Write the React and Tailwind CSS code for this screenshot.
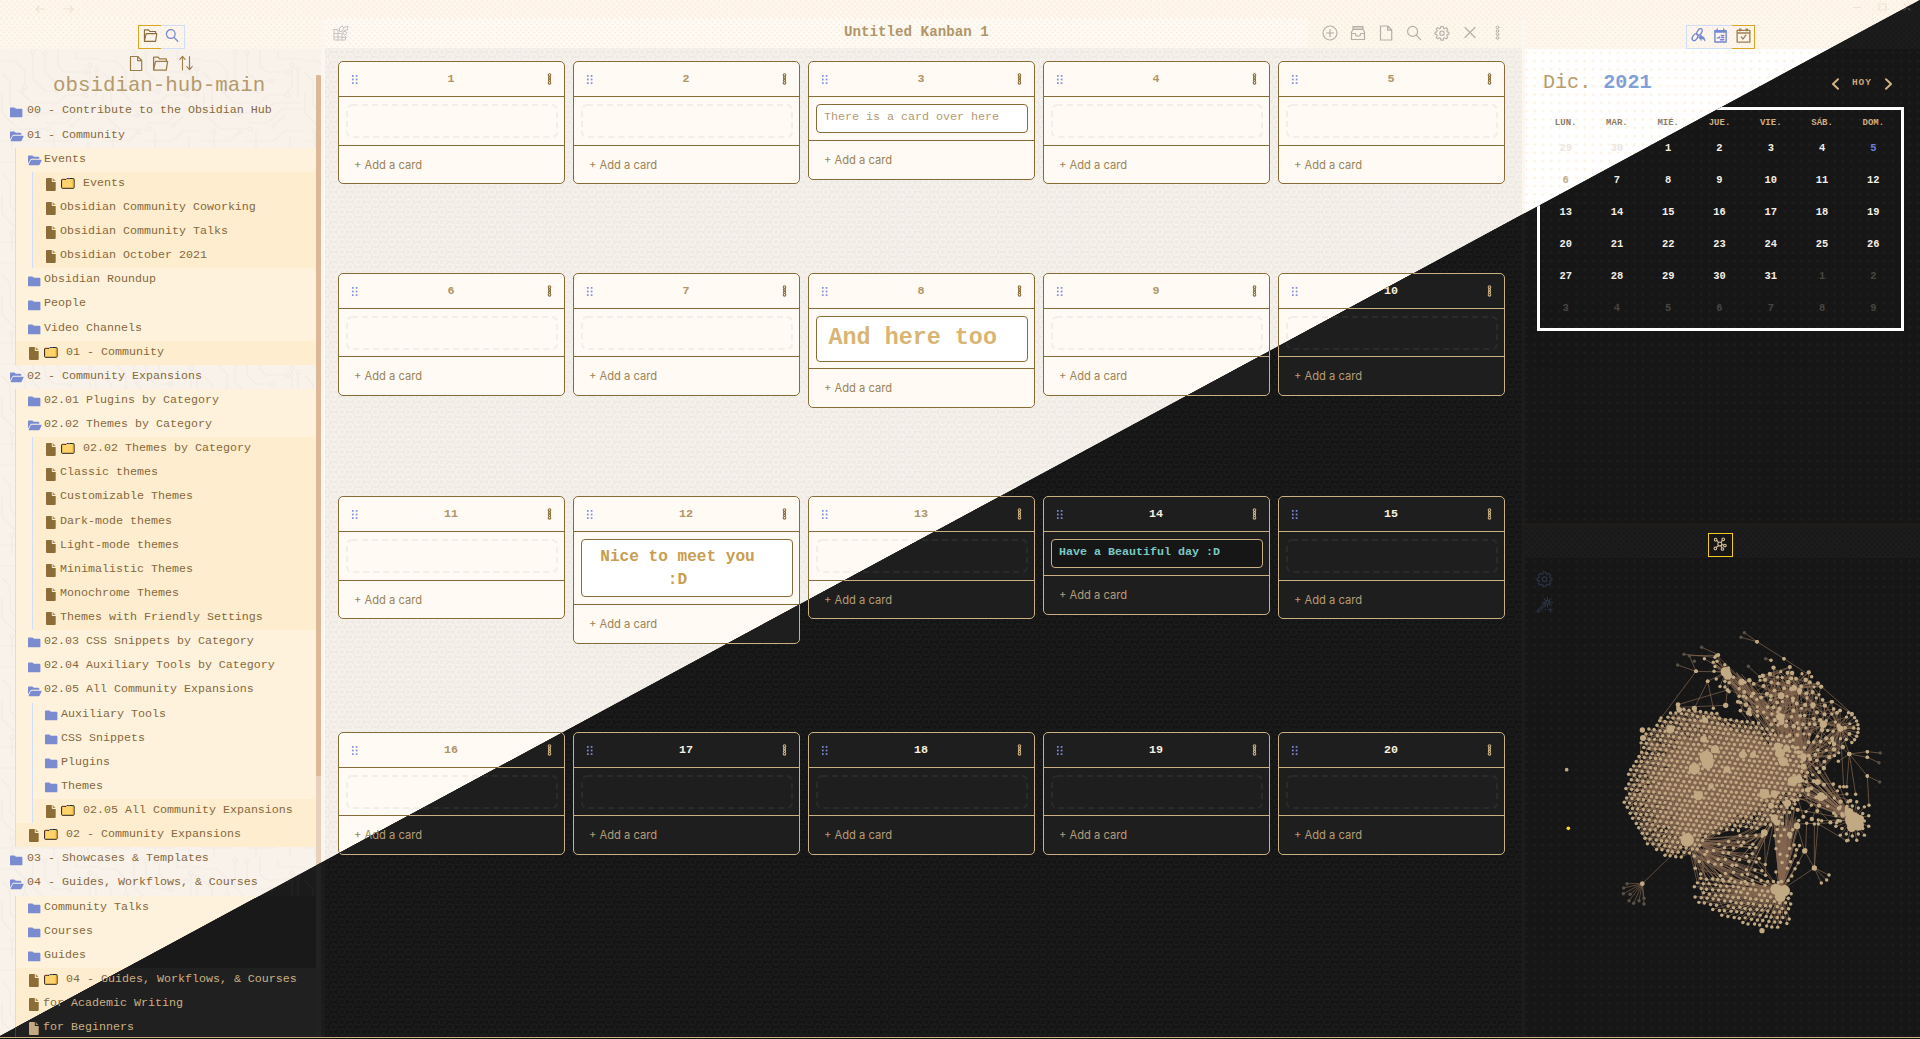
import React, { createContext, useContext, useMemo } from "react";

const Mode = createContext("light");

const LIGHT = {
  page: "bg-[#fff7ed]",
  titleBar: "bg-[#fff6ec]",
  faint: "text-[#efe3d3]",
  sidePanel: "bg-[#f9f2eb]",
  text: "text-[#86693b]",
  heading: "text-[#b39a6c]",
  title: "text-[#b1966a]",
  guide: "border-[#cfdffa]",
  nest: "bg-[#fff2dd]",
  file: "bg-[#ffedcf]",
  fileIcon: "text-[#8c6d37]",
  divider: "bg-[#fbf6ef]",
  track: "bg-[#e7d1bd]",
  thumb: "bg-[#dcb898]",
  boardHead: "bg-[#fefbf4]",
  boardTools: "bg-[#fdf7ec]",
  tool: "text-[#b4afa9]",
  board: "bg-[#efeae4]",
  lane: "bg-[#fffaf3] border-[#886c38]",
  rule: "border-[#886c38]",
  number: "text-[#b0956a]",
  more: "text-[#886c38]",
  slot: "#f2eee8",
  card: "bg-white border-[#886c38]",
  add: "text-[#9b8459]",
  right: "bg-white",
  rightHead: "bg-[#fff7ed]",
};

const DARK = {
  page: "bg-[#161616]",
  titleBar: "bg-[#1c1c1c]",
  faint: "text-[#4a4640]",
  sidePanel: "bg-[#1b1b1b]",
  text: "text-[#cbb083]",
  heading: "text-[#cbb083]",
  title: "text-[#cbb083]",
  guide: "border-[#3a4058]",
  nest: "bg-[#191919]",
  file: "bg-[#202020]",
  fileIcon: "text-[#c4a982]",
  divider: "bg-[#1d1c1a]",
  track: "bg-[#222222]",
  thumb: "bg-[#222222]",
  boardHead: "bg-[#1c1c1c]",
  boardTools: "bg-[#1c1c1c]",
  tool: "text-[#777]",
  board: "bg-[#141414]",
  lane: "bg-[#1e1e1e] border-[#cbb083]",
  rule: "border-[#cbb083]",
  number: "text-[#f7f0de]",
  more: "text-[#cbb083]",
  slot: "#2a2a2a",
  card: "bg-[#161616] border-[#cbb083]",
  add: "text-[#b39c78]",
  right: "bg-[#161616]",
  rightHead: "bg-[#1c1c1c]",
};

function useTheme() {
  const mode = useContext(Mode);
  return { mode, t: mode === "light" ? LIGHT : DARK };
}

/* Renders its children only in the half of the window they belong to. */
function On({ side, children }) {
  const mode = useContext(Mode);
  return side === "both" || side === mode ? children : null;
}

/* ---------- background patterns ---------- */

function Dots() {
  const { mode } = useTheme();
  const id = "dots-" + mode + React.useId();
  const c = mode === "light" ? "#f6e8da" : "#141414";
  return (
    <svg className="absolute inset-0 h-full w-full" aria-hidden="true">
      <defs>
        <pattern id={id} width="5.4" height="5.4" patternUnits="userSpaceOnUse">
          <circle cx="1.3" cy="1.3" r="0.9" fill={c} />
          <circle cx="4" cy="4" r="0.9" fill={c} />
        </pattern>
      </defs>
      <rect width="100%" height="100%" fill={"url(#" + id + ")"} />
    </svg>
  );
}

function Rings() {
  const { mode } = useTheme();
  const id = "rings-" + mode;
  const light = mode === "light";
  const ring = light ? "#f6f2ec" : "#1b1b1b";
  const small = light ? "#f4efe9" : "#191919";
  const pts = [[0, 0], [16.7, 0], [0, 10], [16.7, 10], [8.35, 5]];
  return (
    <svg className="absolute inset-0 h-full w-full" aria-hidden="true">
      <defs>
        <pattern id={id} x="0" y="4" width="16.7" height="10" patternUnits="userSpaceOnUse">
          {pts.map(([x, y], i) => (
            <g key={i}>
              <circle cx={x} cy={y} r="3.1" fill="none" stroke={ring} strokeWidth="1.8" />
              <circle cx={x} cy={y} r="0.8" fill={small} />
            </g>
          ))}
          <circle cx="8.35" cy="0" r="0.8" fill={small} />
          <circle cx="4.2" cy="7.5" r="0.6" fill={small} />
          <circle cx="12.5" cy="2.5" r="0.6" fill={small} />
        </pattern>
      </defs>
      <rect width="100%" height="100%" fill={"url(#" + id + ")"} />
    </svg>
  );
}

function Pluses() {
  const { mode } = useTheme();
  const id = "plus-" + mode + React.useId();
  const c = mode === "light" ? "#fcf1dd" : "#1e1e1e";
  return (
    <svg className="absolute inset-0 h-full w-full" aria-hidden="true">
      <defs>
        <pattern id={id} x="-2.9" y="-0.4" width="8.33" height="8.33" patternUnits="userSpaceOnUse">
          <path d="M4.2 2.7v3M2.7 4.2h3" stroke={c} strokeWidth="1" />
        </pattern>
      </defs>
      <rect width="100%" height="100%" fill={"url(#" + id + ")"} />
    </svg>
  );
}

function Circuit() {
  const { mode } = useTheme();
  const id = "circuit-" + mode;
  const c = mode === "light" ? "#f1ebe3" : "#222222";
  return (
    <svg className="absolute inset-0 h-full w-full" aria-hidden="true">
      <defs>
        <pattern id={id} width="101" height="101" patternUnits="userSpaceOnUse">
          <g fill="none" stroke={c} strokeWidth="1.2">
            <path d="M-5 12h20l10 10v14M33 4v26l12 12h10M45 5v18l9 9h14M58 -5v22l6 6h20M76 2v8h30" />
            <path d="M2 24l8 8v24l10 10h14M2 44v20l16 16h28M22 44l10 10h26l8-8h18" />
            <path d="M40 64h22l10-10h26M46 74h20l14-14h24M74 74l8-6v-2M0 92h28l8-8M42 92h30l10-10h20" />
            <path d="M90 18v20l-8 8M96 22v26M54 82v20M88 88v14M12 84v18" />
            <circle cx="25" cy="38" r="2" /><circle cx="57" cy="42" r="2" />
            <circle cx="70" cy="32" r="2" /><circle cx="86" cy="23" r="2" />
            <circle cx="36" cy="66" r="2" /><circle cx="48" cy="80" r="2" />
            <circle cx="86" cy="46" r="2" /><circle cx="38" cy="64" r="2" />
            <circle cx="72" cy="76" r="2" /><circle cx="22" cy="42" r="2" />
            <circle cx="33" cy="3" r="2" /><circle cx="45" cy="4" r="2" />
            <circle cx="90" cy="16" r="2" /><circle cx="96" cy="20" r="2" />
            <circle cx="38" cy="83" r="2" /><circle cx="12" cy="82" r="2" />
          </g>
        </pattern>
      </defs>
      <rect width="100%" height="100%" fill={"url(#" + id + ")"} />
    </svg>
  );
}

/* ---------- icons ---------- */

function Icon({ w = 16, h = 16, className = "", sw = 1.2, children, box }) {
  return (
    <svg
      width={w}
      height={h}
      viewBox={box || "0 0 16 16"}
      className={"shrink-0 " + className}
      fill="none"
      stroke="currentColor"
      strokeWidth={sw}
      strokeLinejoin="round"
      strokeLinecap="round"
    >
      {children}
    </svg>
  );
}

const FolderOpenLine = (p) => (
  <Icon {...p}>
    <path d="M1.5 14.2V2h4.3l1.4 1.700h6.300v2.400M1.500 14.200L3.300 6h11.400l-1.300 8.200z" />
  </Icon>
);
const SearchLine = (p) => (
  <Icon {...p}>
    <circle cx="6.6" cy="6.4" r="5" />
    <path d="M10.3 10.2l4.3 4.4" />
  </Icon>
);
const FileLine = (p) => (
  <Icon {...p}>
    <path d="M2.5 1h7.3l3.9 4v10H2.5zM9.6 1.2v4h4" />
  </Icon>
);
const SortLine = (p) => (
  <Icon {...p}>
    <path d="M4.5 15V1.5M1.8 4.4L4.5 1.3l2.6 3.1M11.5 1.5v13M8.8 11.6l2.7 3 2.7-3" />
  </Icon>
);

const GEAR =
  "M6.7 1h2.6l.4 2 1.2.5 1.7-1.2 1.8 1.8-1.2 1.7.5 1.2 2 .4v2.2l-2 .4-.5 1.2 1.2 1.7-1.8 1.8-1.7-1.2-1.2.5-.4 2H6.7l-.4-2-1.2-.5-1.7 1.2-1.8-1.8 1.2-1.7-.5-1.2-2-.4V7.400l2-.4.5-1.200L1.600 4.100l1.800-1.800 1.700 1.200L6.300 3z";
const Gear = (p) => (
  <Icon {...p} box="-0.8 -0.6 17.600 17.600">
    <path d={GEAR} />
    <circle cx="8" cy="8.400" r="2.400" />
  </Icon>
);

const FolderSolid = ({ open }) => (
  <svg width="14" height="11" viewBox="0 0 14 11" className="shrink-0 text-[#7a8ccf]" fill="currentColor">
    {open ? (
      <>
        <path d="M0 8.400V1.200Q0 .4.8.4h3.600l1.400 1.300h4.600q.9 0 .9.900v1.200H3.700q-.9 0-1.300.8z" />
        <path d="M3.800 4.700h9.300q.8 0 .5.700l-1.900 4.200q-.3.600-1 .6H1.300q-.9 0-.6-.7l1.900-4.100q.3-.7 1.200-.7z" />
      </>
    ) : (
      <path d="M0 1.200Q0 .400.800.400h3.600l1.600 1.400h5.500q.9 0 .9.900v6.700q0 .9-.9.900H.9q-.9 0-.9-.9z" />
    )}
  </svg>
);

const FileSolid = () => (
  <svg width="10" height="13" viewBox="0 0 10 13" className="shrink-0" fill="currentColor">
    <path d="M0 1q0-1 1-1h4.800v3.300q0 .7.700.7h3.200v8q0 1-1 1H1q-1 0-1-1z" />
    <path d="M6.700.1l2.900 3H6.700z" opacity=".75" />
  </svg>
);

const DividersEmoji = () => (
  <svg width="14" height="11" viewBox="0 0 14 11" className="shrink-0">
    <path d="M.6 9.500V2q0-.6.6-.6h3.800l.9-.9h6.500q.7 0 .7.700v8.300q0 .8-.8.800H1.400q-.8 0-.8-.8z" fill="#ffd36a" stroke="#2a2114" strokeWidth="1" />
    <path d="M1.800 1.400h2" stroke="#c0392b" strokeWidth=".9" />
    <path d="M6.500.6h2.500" stroke="#3b6fc0" strokeWidth=".8" />
    <path d="M11.300.9h1.200" stroke="#25a031" strokeWidth=".9" />
    <path d="M12.100 2.500v7" stroke="#f5a524" strokeWidth=".9" />
  </svg>
);

/* ---------- sidebar ---------- */

const f = (label, extra) => ({ kind: "file", label, ...extra });
const d = (label, children) => ({ kind: "folder", label, children });

const TREE = [
  d("00 - Contribute to the Obsidian Hub"),
  d("01 - Community", [
    d("Events", [
      f("Events", { emoji: true }),
      f("Obsidian Community Coworking"),
      f("Obsidian Community Talks"),
      f("Obsidian October 2021"),
    ]),
    d("Obsidian Roundup"),
    d("People"),
    d("Video Channels"),
    f("01 - Community", { emoji: true }),
  ]),
  d("02 - Community Expansions", [
    d("02.01 Plugins by Category"),
    d("02.02 Themes by Category", [
      f("02.02 Themes by Category", { emoji: true }),
      f("Classic themes"),
      f("Customizable Themes"),
      f("Dark-mode themes"),
      f("Light-mode themes"),
      f("Minimalistic Themes"),
      f("Monochrome Themes"),
      f("Themes with Friendly Settings"),
    ]),
    d("02.03 CSS Snippets by Category"),
    d("02.04 Auxiliary Tools by Category"),
    d("02.05 All Community Expansions", [
      d("Auxiliary Tools"),
      d("CSS Snippets"),
      d("Plugins"),
      d("Themes"),
      f("02.05 All Community Expansions", { emoji: true }),
    ]),
    f("02 - Community Expansions", { emoji: true }),
  ]),
  d("03 - Showcases & Templates"),
  d("04 - Guides, Workflows, & Courses", [
    d("Community Talks"),
    d("Courses"),
    d("Guides"),
    f("04 - Guides, Workflows, & Courses", { emoji: true, side: "both" }),
    f("for Academic Writing", { side: "both" }),
    f("for Beginners", { side: "dark" }),
  ]),
];

function TreeNode({ node, depth }) {
  const { t } = useTheme();
  const side = node.side || "light";
  const isFile = node.kind === "file";
  const pad = depth === 0 ? "pl-[10px]" : isFile ? "pl-[13px]" : "pl-[12px]";
  return (
    <>
      <div className={"flex h-[24.13px] items-center whitespace-pre " + pad + (isFile ? " " + t.file : "")}>
        <On side={side}>
          {isFile ? (
            <span className={"mt-px flex w-[14px] " + t.fileIcon}>
              <FileSolid />
            </span>
          ) : (
            <span className={"mt-px flex " + (depth === 0 ? "w-[17px]" : "w-[16px]")}>
              <FolderSolid open={!!node.children} />
            </span>
          )}
          {node.emoji && (
            <span className="mr-[8px] mb-px ml-[1px] flex w-[14px]">
              <DividersEmoji />
            </span>
          )}
          <span className="pb-px">{node.label}</span>
        </On>
      </div>
      {node.children && (
        <div className={"border-l " + t.guide + " " + t.nest + (depth === 0 ? " ml-[15px]" : " ml-[16px]")}>
          {node.children.map((c, i) => (
            <TreeNode key={i} node={c} depth={depth + 1} />
          ))}
        </div>
      )}
    </>
  );
}

function Sidebar() {
  const { t } = useTheme();
  return (
    <aside className="flex w-[321px] shrink-0 flex-col">
      <div className={"relative h-[31px] shrink-0 " + t.page}>
        <Dots />
        <On side="light">
          <div className="relative ml-[138px] flex pt-[7px]">
            <span className="flex h-[24px] w-[23px] items-center justify-center border-y border-l border-[#daa520] pb-[3px] text-[#8c6d37]">
              <FolderOpenLine w={15} h={15} />
            </span>
            <span className="flex h-[24px] w-[24px] items-center justify-center border-y border-r border-[#cfdffa] pr-[2px] pb-[3px] text-[#7389d2]">
              <SearchLine w={14} h={15} sw={1.400} />
            </span>
          </div>
        </On>
      </div>
      <div className={"relative flex min-h-0 flex-1 flex-col " + t.sidePanel}>
        <Circuit />
        <On side="light">
          <div className="relative flex h-[25px] shrink-0 items-start pt-[6px] pl-[128px] text-[#9c7d4a]">
            <FileLine w={16} h={17} className="mr-[8px]" />
            <FolderOpenLine w={17} h={17} className="mr-[9px]" />
            <SortLine w={16} h={16} sw={1.100} />
          </div>
          <div className={"relative flex h-[25.600px] shrink-0 items-center pb-[3px] pl-[53px] text-[20.800px] whitespace-nowrap " + t.heading}>
            obsidian-hub-main
          </div>
        </On>
        <On side="dark">
          <div className="h-[50.600px] shrink-0" />
        </On>
        <div className="relative flex min-h-0 flex-1">
          <div className={"w-[316px] shrink-0 overflow-hidden text-[11.660px] " + t.text}>
            {TREE.map((n, i) => (
              <TreeNode key={i} node={n} depth={0} />
            ))}
          </div>
          <div className={"-mt-[25px] w-[5px] " + t.track}>
            <div className={"h-[701px] w-full rounded-t-[2px] " + t.thumb} />
          </div>
        </div>
      </div>
    </aside>
  );
}

/* ---------- board ---------- */

const plain = (n, side, addSide) => ({ n, side, addSide: addSide || side, h: "h-[123px]" });
const tight = (n, side, addSide) => ({ ...plain(n, side, addSide), tight: true });

const ROWS = [
  {
    gap: "mb-[89px]",
    lanes: [
      plain(1, "light"),
      plain(2, "light"),
      { n: 3, side: "light", addSide: "light", h: "h-[119px]", card: "note" },
      plain(4, "light"),
      plain(5, "light"),
    ],
  },
  {
    gap: "mb-[88px]",
    lanes: [
      tight(6, "light"),
      tight(7, "light"),
      { n: 8, side: "light", addSide: "light", h: "h-[135px]", card: "big", tight: true },
      tight(9, "light"),
      tight(10, "both", "dark"),
    ],
  },
  {
    gap: "mb-[89px]",
    lanes: [
      plain(11, "light"),
      { n: 12, side: "light", addSide: "light", h: "h-[148px]", card: "meet" },
      plain(13, "light", "dark"),
      { n: 14, side: "dark", addSide: "dark", h: "h-[119px]", card: "day" },
      plain(15, "dark"),
    ],
  },
  {
    gap: "",
    lanes: [tight(16, "light", "both"), tight(17, "dark"), tight(18, "dark"), tight(19, "dark"), tight(20, "dark")],
  },
];

function CardBody({ kind }) {
  const { t } = useTheme();
  const base = "rounded-[4px] border whitespace-nowrap " + t.card;
  if (kind === "note")
    return (
      <div className={base + " flex h-[29px] items-center pb-px pl-[7.500px] text-[11.660px] text-[#b39a70]"}>
        <On side="light">There is a card over here</On>
      </div>
    );
  if (kind === "big")
    return (
      <div className={base + " flex h-[46px] items-center pl-[12px] text-[23.400px] font-bold text-[#d8b572]"}>
        <On side="light">And here too</On>
      </div>
    );
  if (kind === "meet")
    return (
      <div className={base + " flex h-[58px] flex-col pt-[6px] pr-[18px] text-center text-[16.100px] leading-[23px] font-bold text-[#c79d50]"}>
        <On side="light">
          <span>Nice to meet you</span>
          <span>:D</span>
        </On>
      </div>
    );
  return (
    <div className={base + " flex h-[29px] items-center pb-px pl-[7.500px] text-[11.660px] font-bold text-[#7ac8c4]"}>
      <On side="dark">Have a Beautiful day :D</On>
    </div>
  );
}

function EmptySlot() {
  const { t } = useTheme();
  return (
    <svg width="212" height="34" className="block">
      <rect x="1" y="1" width="210" height="32" rx="5" fill="none" stroke={t.slot} strokeWidth="2" strokeDasharray="6 4" />
    </svg>
  );
}

function Lane({ lane }) {
  const { t } = useTheme();
  return (
    <section className={"flex w-[227px] shrink-0 flex-col rounded-[5px] border " + t.lane + " " + lane.h}>
      <header className={"flex h-[35px] shrink-0 items-center justify-between border-b pr-[12px] pl-[12px] " + t.rule}>
        <svg width="8" height="11" viewBox="0 0 8 11" className="text-[#7d8fdd]" fill="currentColor">
          {[1.800, 5.600].map((x) =>
            [1.900, 5.500, 9.100].map((y) => <rect key={x + "-" + y} x={x - 0.850} y={y - 0.850} width="1.700" height="1.700" />)
          )}
        </svg>
        <span className={"pt-px pr-[4px] text-[11.660px] font-bold " + t.number}>
          <On side={lane.side}>{lane.n}</On>
        </span>
        <svg width="5" height="12" viewBox="0 0 5 12" className={t.more} fill="none" stroke="currentColor" strokeWidth="1.100">
          <circle cx="2.500" cy="2.100" r="1.300" />
          <circle cx="2.500" cy="4.700" r="1.100" />
          <circle cx="2.500" cy="7.200" r="1.100" />
          <circle cx="2.500" cy="9.800" r="1.300" />
        </svg>
      </header>
      <div className={"border-b px-[6.500px] pt-[7px] " + (lane.tight ? "pb-[6px] " : "pb-[7px] ") + t.rule}>
        {lane.card ? <CardBody kind={lane.card} /> : <EmptySlot />}
      </div>
      <footer className={"flex flex-1 items-center pt-px pl-[15px] font-['Inter',sans-serif] text-[11.200px] " + t.add}>
        <On side={lane.addSide}>+ Add a card</On>
      </footer>
    </section>
  );
}

function Board() {
  const { t } = useTheme();
  return (
    <main className="flex w-[1197px] shrink-0 flex-col">
      <div className="flex h-[30px] shrink-0">
        <div className={"relative flex w-[983px] items-center " + t.boardHead}>
          <Dots />
          <On side="light">
            <Icon w={16} h={16} sw={1} className="relative ml-[8px] text-[#c8c5bf]">
              <path d="M1 4.500h4v4h4v4h4.500M1 4.500V15h11.500v-4M1 8.500h8M1 12h8M5 8.500V15M9 12v3" />
              <path d="M6.500 3l2.500-2 2 2-2 3.500H7zM11 2.200l4-.9-.8 3.700-3 .500M10 7l2.500-.8 1.700 1.800-2.400 2.200z" />
            </Icon>
            <h1 className={"absolute left-[519px] text-[14.200px] font-bold whitespace-nowrap " + t.title}>Untitled Kanban 1</h1>
          </On>
        </div>
        <div className={"relative flex flex-1 items-center " + t.boardTools}>
          <Dots />
          <On side="light">
            <div className={"relative flex items-center gap-[12px] pb-px pl-[14px] " + t.tool}>
              <Icon>
                <circle cx="8" cy="8" r="7" />
                <path d="M8 4.500v7M4.500 8h7" />
              </Icon>
              <Icon>
                <path d="M1.500 14.500V7L3 4.500h10L14.500 7v7.500zM1.500 8.500h3.700l1 2.500h3.600l1-2.500h3.700M3 4.500v-3h10v3M3 3h10" />
              </Icon>
              <FileLine />
              <SearchLine w={16} h={16} />
              <Gear sw={1.200} />
              <Icon>
                <path d="M3 2.500l10 10M13 2.500l-10 10" />
              </Icon>
              <Icon sw={1}>
                <circle cx="7.500" cy="2.500" r="1.300" />
                <circle cx="7.500" cy="6" r="1.300" />
                <circle cx="7.500" cy="9.500" r="1.300" />
                <circle cx="7.500" cy="13" r="1.300" />
              </Icon>
            </div>
          </On>
        </div>
      </div>
      <div className={"relative min-h-0 flex-1 pt-[13px] pl-[13px] " + t.board}>
        <Rings />
        <div className="relative">
          {ROWS.map((row, i) => (
            <div key={i} className={"flex items-start gap-[8px] " + (i === 2 ? "mb-[88px]" : row.gap)}>
              {row.lanes.map((l) => (
                <Lane key={l.n} lane={l} />
              ))}
            </div>
          ))}
        </div>
      </div>
    </main>
  );
}

/* ---------- calendar ---------- */

const DAY_NAMES = [
  ["LUN.", "light"], ["MAR.", "light"], ["MIÉ.", "light"], ["JUE.", "dark"], ["VIE.", "dark"], ["SÁB.", "dark"], ["DOM.", "dark"],
];
const DAYS = Array.from({ length: 42 }, (_, i) => {
  const n = i - 1;
  if (n < 1) return { n: n + 30, tone: "out", side: "light" };
  if (n > 31) return { n: n - 31, tone: "out", side: "dark" };
  return { n, tone: n === 5 ? "today" : "in", side: n === 6 ? "light" : "dark" };
});

function Calendar() {
  const { mode } = useTheme();
  const light = mode === "light";
  const tone = {
    in: light ? "text-[#c0aa84]" : "text-[#f4efe6]",
    out: light ? "text-[#ece6de]" : "text-[#474542]",
    today: "text-[#6c7fd8]",
  };
  return (
    <div className="relative">
      <div className="flex h-[58px] items-center pt-[11px] pl-[18px]">
        <div className="w-[288px] text-[20.100px] whitespace-pre text-[#b89b6a]">
          <On side="light">
            Dic. <span className="font-bold text-[#7f9fd8]">2021</span>
          </On>
        </div>
        <On side="dark">
          <div className="flex items-center text-[#d0b287]">
            <Icon w={9} h={12} box="0 0 9 12" sw={2}>
              <path d="M7 1.300L2 6l5 4.700" />
            </Icon>
            <span className="mx-[12px] text-[9.500px] font-bold tracking-[0.900px] text-[#c9a679]">HOY</span>
            <Icon w={9} h={12} box="0 0 9 12" sw={2}>
              <path d="M2 1.300L7 6l-5 4.700" />
            </Icon>
          </div>
        </On>
      </div>
      <div className="ml-[12px] h-[224px] w-[367px] border-[3px] border-white pr-[2px]">
        <div className="grid h-[22px] grid-cols-7 items-center pt-[5px] text-center text-[9px] font-bold">
          {DAY_NAMES.map(([n, s]) => (
            <span key={n} className={light ? "text-[#8f7d63]" : "text-[#cfae80]"}>
              <On side={s}>{n}</On>
            </span>
          ))}
        </div>
        <div className="grid auto-rows-[32px] grid-cols-7 items-center pt-px text-center text-[10.400px] font-bold">
          {DAYS.map((x, i) => (
            <span key={i} className={tone[x.tone]}>
              <On side={x.side}>{x.n}</On>
            </span>
          ))}
        </div>
      </div>
    </div>
  );
}

/* ---------- graph ---------- */

function rng(seed) {
  let s = seed;
  return () => {
    s = (s * 1664525 + 1013904223) % 4294967296;
    return s / 4294967296;
  };
}

function inside([x, y], poly) {
  let hit = false;
  for (let i = 0, j = poly.length - 1; i < poly.length; j = i++) {
    const [xi, yi] = poly[i];
    const [xj, yj] = poly[j];
    if (yi > y !== yj > y && x < ((xj - xi) * (y - yi)) / (yj - yi) + xi) hit = !hit;
  }
  return hit;
}

function fill(poly, step, jitter, rand, keep = 1) {
  const out = [];
  const h = step * 0.866;
  for (let r = 0; r * h < 1020; r++) {
    for (let c = -3; c * step < 900; c++) {
      const gx = c * step + (r % 2) * (step / 2);
      const gy = r * h;
      const x = gx + (rand() - 0.5) * jitter + gy * 0.04;
      const y = gy + (rand() - 0.5) * jitter + gx * 0.12 - 60;
      if (rand() < keep && inside([x, y], poly)) out.push([x, y]);
    }
  }
  return out;
}

const BODY = [[165, 296], [220, 262], [268, 264], [330, 278], [440, 300], [490, 320], [545, 345], [600, 400], [610, 470], [575, 560], [520, 610], [450, 630], [380, 635], [320, 650], [275, 690], [235, 718], [190, 712], [130, 680], [88, 612], [55, 558], [62, 480], [78, 438], [105, 380], [112, 330]];
const CROWN = [[440, 170], [480, 142], [535, 120], [615, 155], [650, 200], [705, 255], [762, 325], [735, 365], [680, 420], [640, 470], [600, 470], [545, 345], [490, 310], [400, 270], [395, 215]];
const CREST = [[290, 115], [345, 100], [420, 180], [480, 250], [400, 250], [335, 190]];
const BASE = [[262, 775], [340, 765], [430, 785], [505, 775], [560, 820], [568, 850], [552, 908], [525, 925], [470, 928], [360, 895], [270, 840]];
const NECK = [[262, 700], [380, 640], [470, 640], [500, 780], [430, 790], [265, 780]];
const STEM = [[500, 600], [600, 600], [575, 780], [510, 790]];
const NECKR = [[600, 470], [660, 470], [755, 525], [700, 620], [610, 610], [560, 560]];

const HUBS = [
  [304, 412, 20], [308, 430, 18], [268, 446, 17], [330, 388, 12], [362, 156, 15], [368, 166, 13], [410, 186, 10], [196, 328, 12],
  [280, 527, 14], [247, 660, 20], [478, 522, 15], [508, 522, 11], [413, 404, 11], [444, 405, 9], [296, 358, 10], [300, 300, 9],
  [366, 448, 10], [524, 290, 11], [529, 306, 9], [528, 227, 10], [655, 313, 11], [706, 326, 9], [584, 211, 8], [568, 204, 8],
  [624, 255, 8], [525, 400, 15], [535, 425, 14], [518, 380, 12], [545, 385, 10], [595, 410, 10], [563, 484, 15], [580, 478, 12],
  [596, 440, 9], [648, 530, 13], [638, 486, 9], [608, 510, 8], [547, 550, 11], [498, 557, 9], [478, 638, 10], [508, 594, 11],
  [516, 608, 9], [576, 618, 10], [744, 600, 24], [732, 578, 14], [760, 615, 17], [740, 622, 14], [765, 597, 12], [513, 808, 17],
  [538, 812, 17], [526, 830, 16], [525, 815, 16], [471, 932, 8], [112, 330, 8], [114, 354, 9], [219, 254, 7], [223, 270, 8],
  [362, 256, 8], [733, 402, 7], [112, 791, 7], [599, 693, 8], [628, 744, 8], [554, 643, 8], [318, 498, 8], [431, 278, 8], [268, 265, 8],
];

const STRAYS = [
  [[456, 65], [418, 38]], [[456, 65], [408, 52]], [[456, 65], [537, 116]], [[340, 104], [290, 82]], [[253, 107], [340, 106]], [[237, 103], [330, 112]],
  [[253, 107], [273, 154]], [[273, 154], [218, 135]], [[273, 154], [362, 156]], [[273, 154], [168, 294]], [[430, 139], [464, 170]], [[482, 116], [498, 121]],
  [[308, 184], [362, 156]], [[308, 184], [268, 265]], [[308, 184], [325, 265]], [[219, 254], [367, 210]], [[219, 262], [362, 256]], [[362, 256], [367, 210]],
  [[733, 402], [787, 395]], [[787, 395], [826, 399]], [[733, 402], [787, 412]], [[787, 412], [822, 428]], [[733, 402], [787, 468]], [[787, 468], [824, 486]],
  [[787, 468], [792, 556]], [[733, 402], [752, 523]], [[733, 402], [700, 424]], [[733, 402], [682, 362]], [[733, 402], [706, 326]], [[706, 326], [716, 500]],
  [[733, 402], [725, 500]], [[537, 116], [620, 170]], [[650, 200], [741, 281]], [[741, 281], [682, 245]],
  [[599, 693], [576, 618]], [[599, 693], [540, 800]], [[599, 693], [628, 744]], [[628, 744], [526, 812]], [[628, 744], [672, 765]], [[628, 744], [665, 780]],
  [[628, 744], [649, 789]], [[628, 744], [628, 612]], [[628, 744], [640, 600]], [[605, 610], [602, 690]], [[247, 660], [112, 791]],
  [[576, 612], [695, 608]], [[640, 612], [725, 662]],
];

const GHOSTS = [[418, 38], [408, 52], [290, 82], [237, 103], [253, 107], [218, 135], [268, 124], [430, 139], [482, 116], [826, 399], [822, 428], [824, 486], [66, 791], [56, 804], [55, 821], [72, 842], [86, 850], [102, 842], [117, 852], [117, 835], [75, 823]];

function Graph() {
  const { lines, faint, nodes, bigs } = useMemo(() => {
    const rand = rng(7);
    const body = fill(BODY, 16.600, 2.500, rand);
    const crown = fill(CROWN, 21.500, 12, rand, 0.85);
    const crest = fill(CREST, 21, 12, rand, 0.7);
    const base = fill(BASE, 17.500, 4, rand, 0.95);
    const neck = fill(NECK, 23, 12, rand, 0.85);
    const stem = fill(STEM, 22, 8, rand, 0.8);
    const neckR = fill(NECKR, 26, 10, rand, 0.7);
    const lobe = [];
    for (let k = 0; k < 24; k++) {
      const a = (k / 24) * Math.PI * 2;
      const r = k % 2 ? 57 : 42;
      lobe.push([742 + Math.cos(a) * (r - 6), 603 + Math.sin(a) * (r + 3)]);
    }
    const fan = [];
    for (let k = 0; k < 10; k++) {
      const a = -1.100 + k * 0.220;
      fan.push([706 + Math.cos(a) * 54, 326 + Math.sin(a) * 54]);
    }
    const seg = (a, b) => "M" + a[0].toFixed(0) + " " + a[1].toFixed(0) + "L" + b[0].toFixed(0) + " " + b[1].toFixed(0);
    const pick = (arr) => arr[Math.floor(rand() * arr.length)];
    const near = (p, arr, r) => {
      const c = arr.filter((q) => Math.hypot(q[0] - p[0], q[1] - p[1]) < r);
      return c.length ? pick(c) : p;
    };
    const L = [];
    body.forEach((p) => {
      L.push(seg(p, pick([[304, 415], [268, 446], [280, 527], [478, 522], [247, 660], [413, 404], [330, 388], [525, 400]])));
      L.push(seg(p, pick([[304, 415], [478, 522], [525, 400], [563, 484]])));
      L.push(seg(p, near(p, body, 70)));
    });
    crown.forEach((p) => {
      L.push(seg(p, near(p, [[655, 313], [706, 326], [584, 211], [524, 290], [528, 227], [568, 204], [624, 255], [595, 410]], 130)));
      L.push(seg(p, near(p, crown, 90)));
      if (rand() < 0.5) L.push(seg(p, pick([[525, 400], [563, 484], [524, 290], [595, 410]])));
    });
    crest.forEach((p) => {
      L.push(seg(p, [362, 156]));
      if (rand() < 0.5) L.push(seg(p, pick([[524, 290], [410, 186]])));
    });
    for (let k = 0; k < 46; k++) {
      if (k < 26) L.push(seg([362 + rand() * 50, 156 + rand() * 35], [500 + rand() * 60, 290 + rand() * 120]));
      L.push(seg([744, 600], [560 + rand() * 100, 420 + rand() * 130]));
      L.push(seg([526, 812], [505 + rand() * 75, 560 + rand() * 70]));
      L.push(seg([515 + rand() * 70, 270 + rand() * 80], [560 + rand() * 60, 440 + rand() * 100]));
    }
    base.forEach((p) => {
      L.push(seg(p, [526, 812]));
      if (rand() < 0.22) L.push(seg(p, pick([[247, 660], [262, 700], [290, 700]])));
    });
    neck.forEach((p) => {
      L.push(seg(p, pick([[247, 660], [270, 690], [290, 670]])));
      if (rand() < 0.6) L.push(seg(p, pick([[526, 812], [478, 638], [508, 594]])));
    });
    stem.forEach((p) => L.push(seg(p, [526, 812])));
    neckR.forEach((p) => L.push(seg(p, pick([[744, 600], [563, 484], [648, 530]]))));
    lobe.forEach((p) => L.push(seg(p, [744, 600])));
    fan.forEach((p) => L.push(seg(p, [706, 326])));
    STRAYS.forEach(([a, b]) => L.push(seg(a, b)));
    const F = GHOSTS.slice(12).map((p) => seg(p, [112, 791]));
    const ends = STRAYS.flat().filter((p) => !GHOSTS.some((g) => g[0] === p[0] && g[1] === p[1]));
    return {
      lines: L.join(""),
      faint: F.join(""),
      nodes: [...body, ...crest, ...base, ...neck, ...stem, ...lobe, ...fan, ...ends],
      bigs: [...crown, ...neckR].map((p) => [p[0], p[1], 4.600 + rand() * 2.200]),
    };
  }, []);
  return (
    <svg className="absolute inset-0" width="395" height="479" viewBox="0 0 1185 1437">
      <g transform="translate(240 186)">
        <path d={faint} stroke="#6b5442" strokeWidth="2.500" fill="none" />
        <path d={lines} stroke="#856750" strokeWidth="2.200" fill="none" opacity="0.92" />
        <g fill="#575047">
          {GHOSTS.map(([x, y], i) => (
            <circle key={i} cx={x} cy={y} r="5.200" />
          ))}
        </g>
        <g fill="#c1a983">
          {nodes.map(([x, y], i) => (
            <circle key={i} cx={x.toFixed(1)} cy={y.toFixed(1)} r="5.200" />
          ))}
          {bigs.map(([x, y, r], i) => (
            <circle key={"b" + i} cx={x.toFixed(1)} cy={y.toFixed(1)} r={r.toFixed(1)} />
          ))}
          {HUBS.map(([x, y, r], i) => (
            <circle key={"h" + i} cx={x} cy={y} r={r} />
          ))}
        </g>
      </g>
      <circle cx="125" cy="635" r="5.500" fill="#c1a983" />
      <circle cx="130" cy="811" r="5.500" fill="#ffd91a" />
    </svg>
  );
}

function RightPane() {
  const { t } = useTheme();
  return (
    <aside className="flex w-[395px] shrink-0 flex-col">
      <div className={"relative h-[31px] shrink-0 " + t.rightHead}>
        <Dots />
        <On side="light">
          <div className="relative ml-[161px] flex pt-[7px] text-[#7389d2]">
            <span className="flex h-[24px] w-[23px] items-center justify-center border-y border-l border-[#cfdffa] pb-[3px]">
              <Icon w={15} h={15} sw={1.400}>
                <ellipse cx="9" cy="4.300" rx="2.300" ry="3.900" transform="rotate(32 9 4.300)" />
                <ellipse cx="4.300" cy="9.800" rx="2.500" ry="4" transform="rotate(32 4.300 9.800)" />
                <path d="M8 9.800l3-2.700v1.700c2.600.1 4 1.900 4 5.200-1-1.900-2.200-2.600-4-2.600v1.700z" fill="currentColor" strokeWidth=".6" />
              </Icon>
            </span>
            <span className="flex h-[24px] w-[23px] items-center justify-center border-y border-[#cfdffa] pb-[3px]">
              <Icon w={15} h={15} sw={1.500}>
                <path d="M2 3h12v12H2zM2 4.200h12M4.500 1v3M11.500 1v3M4.500 10.500h2.500v-1M9 8h2.500M9 10.200h2.500M8 12.500h3.500" />
              </Icon>
            </span>
            <span className="flex h-[24px] w-[23px] items-center justify-center border-y border-r border-[#daa520] pb-[3px] text-[#a08050]">
              <Icon w={15} h={15} sw={1.400}>
                <path d="M1.200 2.500h13.600V15H1.200zM1.200 5.300h13.600M5.500 9.500l2 2.200 3-4" />
                <circle cx="4.500" cy="1.900" r="1" />
                <circle cx="11.500" cy="1.900" r="1" />
              </Icon>
            </span>
          </div>
        </On>
      </div>
      <div className={"relative h-[474px] shrink-0 " + t.right}>
        <Pluses />
        <Calendar />
      </div>
      <div className={"h-[4px] shrink-0 " + t.divider} />
      <div className={"relative h-[31px] shrink-0 " + t.rightHead}>
        <Dots />
        <On side="dark">
          <div className="relative ml-[183px] pt-[6px]">
            <span className="flex h-[24px] w-[25px] items-center justify-center border border-[#f2cb1c] bg-[#161616] pr-px pb-[2px] text-[#d9c29b]">
              <Icon w={14} h={14} sw={1.200}>
                <circle cx="7.800" cy="8" r="2.300" />
                <path d="M4.200 3.800L6.200 6.200M10.800 3.800L9.300 6.200M3.700 12L6.200 9.800M10.100 8.700l2 .6M9 10l1.200 2.400" />
                <circle cx="3" cy="3" r="1.500" />
                <circle cx="11.700" cy="2.700" r="1.500" />
                <circle cx="2.700" cy="13" r="1.500" />
                <circle cx="13.600" cy="9.700" r="1.500" />
                <circle cx="10.800" cy="13.700" r="1.500" />
              </Icon>
            </span>
          </div>
        </On>
      </div>
      <div className={"relative min-h-0 flex-1 overflow-hidden " + t.right}>
        <Pluses />
        <On side="dark">
          <Graph />
          <div className="relative flex w-[29px] flex-col gap-[8px] pt-[12px] pl-[11px] text-[#2b3444]">
            <Gear w={17} h={18} sw={1.200} />
            <Icon w={17} h={17} sw={1}>
              <path d="M.8 14.200L8 7.200l1.300 1.300L2.200 15.500z" />
              <path d="M10.800 1v3.500M10.800 7.500v3M6 5.800h3.400M12.200 5.800h3.600M7.500 2.500l2.300 2.300M14.200 2.500l-2.300 2.300M11.900 6.900l2.300 2.300" />
              <circle cx="10.800" cy="5.800" r="1.700" />
              <path d="M13.500 11.200v3.600M11.700 13h3.600M8.800 12.800h.6" />
            </Icon>
          </div>
        </On>
      </div>
    </aside>
  );
}

function TitleBar() {
  const { t } = useTheme();
  return (
    <div className={"relative h-[18px] shrink-0 " + t.titleBar}>
      <Dots />
      <div className={"relative flex h-full items-start " + t.faint}>
        <On side="light">
          <Icon w={10} h={8} box="0 0 10 8" className="mt-[5px] ml-[35px]">
            <path d="M9.500 4H1M4 1L1 4l3 3" />
          </Icon>
          <Icon w={10} h={8} box="0 0 10 8" className="mt-[5px] ml-[19px]">
            <path d="M.5 4H9M6 1l3 3-3 3" />
          </Icon>
          <Icon w={8} h={8} box="0 0 8 8" className="mt-[3px] ml-[1779px]">
            <path d="M.5 4.500h7" />
          </Icon>
          <Icon w={9} h={8} box="0 0 9 8" className="mt-[3px] ml-[17px]">
            <path d="M1 1h7v6H1z" />
          </Icon>
        </On>
        <On side="dark">
          <div className="w-[1887px]" />
        </On>
        <Icon w={8} h={8} box="0 0 8 8" className="mt-[3px] ml-[16px]">
          <path d="M1 1l6 6M7 1L1 7" />
        </Icon>
      </div>
    </div>
  );
}

function Workspace() {
  const { t } = useTheme();
  return (
    <div className={"flex h-[1037px] w-[1920px] flex-col overflow-hidden " + t.page}>
      <TitleBar />
      <div className="flex min-h-0 flex-1">
        <Sidebar />
        <div className={"w-[4px] shrink-0 " + t.divider} />
        <Board />
        <div className={"w-[3px] shrink-0 " + t.divider} />
        <RightPane />
      </div>
    </div>
  );
}

export default function App() {
  return (
    <div className="relative h-[1039px] w-[1920px] overflow-hidden bg-[#141414] font-['Liberation_Mono',monospace]">
      <Mode.Provider value="light">
        <Workspace />
      </Mode.Provider>
      <Mode.Provider value="dark">
        <div className="absolute inset-x-0 top-0 [clip-path:polygon(1920px_0px,1920px_1037px,0px_1037px,0px_1036px)]">
          <Workspace />
        </div>
      </Mode.Provider>
      <div className="h-px w-full bg-[#cbb083]" />
    </div>
  );
}
